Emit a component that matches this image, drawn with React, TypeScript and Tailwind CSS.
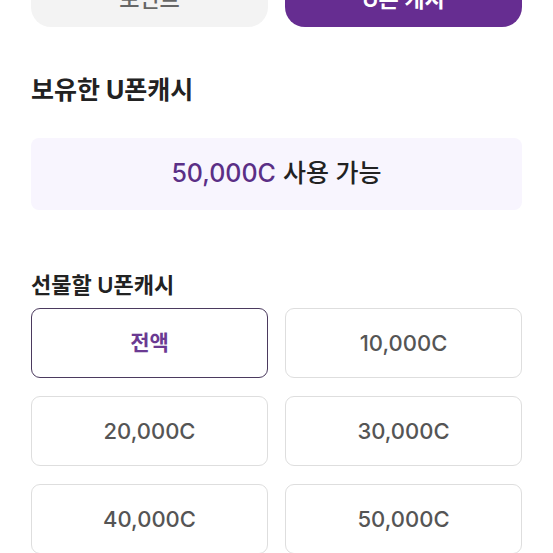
const amounts = ["전액", "10,000C", "20,000C", "30,000C", "40,000C", "50,000C"];

export default function App() {
  const selected = "전액";

  return (
    <div
      className="min-h-[553px] bg-white px-[31px] overflow-hidden"
      style={{ fontFamily: "Inter, 'Noto Sans CJK KR', sans-serif" }}
    >
      {/* Tabs */}
      <div className="-mt-[29px] grid grid-cols-2 gap-[17px]">
        <button className="h-[56px] rounded-[20px] bg-[#f3f3f3] text-[22px] font-medium text-[#666]">
          포인트
        </button>
        <button className="h-[56px] rounded-[20px] bg-[#662d91] text-[22px] font-semibold text-white">
          U폰 캐시
        </button>
      </div>

      {/* Balance */}
      <h2 className="mt-[47px] text-[25px] leading-[32px] font-bold text-[#222]">
        보유한 U폰캐시
      </h2>
      <div className="mt-[32px] flex h-[72px] items-center justify-center rounded-[8px] bg-[#f8f5fe] text-[25px] font-medium text-[#222]">
        <span className="text-[#5b2f86]">50,000C</span>
        <span className="ml-[7px]">사용 가능</span>
      </div>

      {/* Gift amount */}
      <h3 className="mt-[60px] text-[22px] leading-[30px] font-semibold text-[#222]">
        선물할 U폰캐시
      </h3>
      <div className="mt-[8px] grid grid-cols-2 gap-x-[17px] gap-y-[18px]">
        {amounts.map((a) =>
          a === selected ? (
            <button
              key={a}
              className="h-[70px] rounded-[9px] border-[1.5px] border-[#4b3a5e] bg-white text-[21px] font-bold text-[#6b3a92]"
            >
              {a}
            </button>
          ) : (
            <button
              key={a}
              className="h-[70px] rounded-[9px] border border-[#dedede] bg-white text-[22px] font-medium text-[#555]"
            >
              {a}
            </button>
          )
        )}
      </div>
    </div>
  );
}
